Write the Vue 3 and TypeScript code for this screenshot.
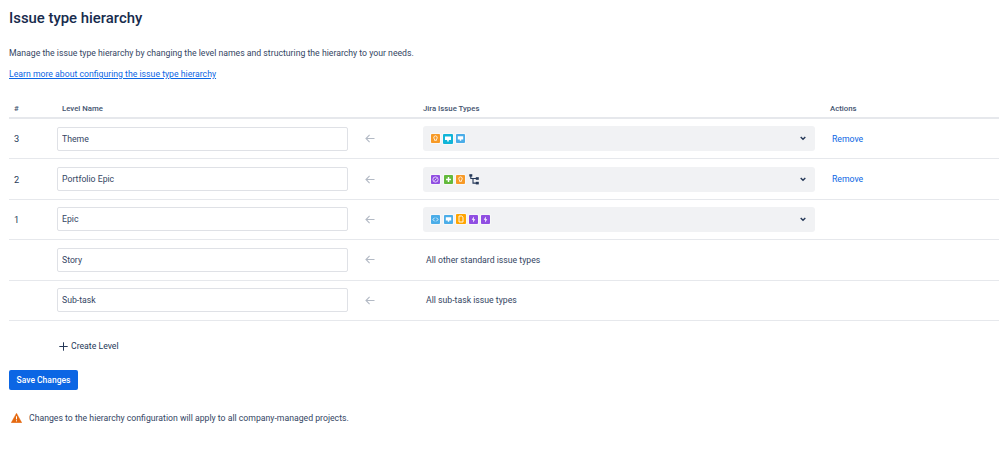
<script setup lang="ts">
type Icon = { c: string; k: string; big?: boolean };
type Row = { n: string; name: string; icons?: Icon[]; text?: string; remove?: boolean };
const or = '#f79a26', cy = '#10b5d8', bl = '#4bade8', pu = '#904ee2';
const rows: Row[] = [
  { n: '3', name: 'Theme', remove: true, icons: [{ c: or, k: 'bulb' }, { c: cy, k: 'screen', big: true }, { c: bl, k: 'screen' }] },
  { n: '2', name: 'Portfolio Epic', remove: true, icons: [{ c: pu, k: 'circle' }, { c: '#63ba3c', k: 'plus' }, { c: or, k: 'bulb' }, { c: 'none', k: 'tree' }] },
  { n: '1', name: 'Epic', icons: [{ c: bl, k: 'code' }, { c: bl, k: 'screen' }, { c: '#ffa500', k: 'doc', big: true }, { c: pu, k: 'bolt' }, { c: pu, k: 'bolt' }] },
  { n: '', name: 'Story', text: 'All other standard issue types' },
  { n: '', name: 'Sub-task', text: 'All sub-task issue types' },
];
</script>

<template>
  <main class="page">
    <h1 class="title">Issue type hierarchy</h1>
    <p class="desc">Manage the issue type hierarchy by changing the level names and structuring the hierarchy to your needs.</p>
    <a class="learn" href="#">Learn more about configuring the issue type hierarchy</a>

    <div class="grid head">
      <span class="num">#</span>
      <span class="lvl">Level Name</span>
      <span></span>
      <span class="jira">Jira Issue Types</span>
      <span>Actions</span>
    </div>

    <div v-for="r in rows" :key="r.name" class="grid row">
      <span class="num n">{{ r.n }}</span>
      <input class="input" :value="r.name" />
      <svg class="arrow" width="10" height="9" viewBox="0 0 10 9" fill="none" stroke="#b3bac5" stroke-width="1.1">
        <path d="M9.5 4.5H1M4.6 .8 1 4.5l3.6 3.7" />
      </svg>
      <div v-if="r.icons" class="select">
        <span class="icons">
          <template v-for="(ic, i) in r.icons" :key="i">
            <svg v-if="ic.k === 'tree'" class="tree" width="11" height="11" viewBox="0 0 11 11" fill="none" stroke="#253858" stroke-width="1.1">
              <path d="M1.8 1v3.5h6M4 4.5v4.6h4" />
              <rect x=".3" y=".2" width="3" height="2.4" fill="#253858" stroke="none" />
              <rect x="6.8" y="3.2" width="3" height="2.6" fill="#253858" stroke="none" />
              <rect x="6.8" y="7.8" width="3" height="2.6" fill="#253858" stroke="none" />
            </svg>
            <svg v-else class="ic" :class="{ big: ic.big }" viewBox="0 0 10 10">
              <rect width="10" height="10" rx="1" :fill="ic.c" />
              <path v-if="ic.k === 'bulb'" d="M5 2a2 2 0 0 0-1.1 3.6V7h2.2V5.6A2 2 0 0 0 5 2Z" fill="none" stroke="#fff" stroke-width=".9" />
              <path v-else-if="ic.k === 'screen'" d="M2 2.5h6v3.6H5.8V7.6H4.2V6.1H2Z" fill="#fff" />
              <g v-else-if="ic.k === 'circle'" fill="none" stroke="#fff" stroke-width=".8">
                <circle cx="5" cy="5" r="2.9" />
                <path d="M3.8 6.2 6.2 3.8" />
              </g>
              <path v-else-if="ic.k === 'plus'" d="M5 2.3v5.4M2.3 5h5.4" stroke="#fff" stroke-width="1.6" />
              <path v-else-if="ic.k === 'code'" d="M4 3 2.2 5 4 7M6 3l1.8 2L6 7" fill="none" stroke="#fff" stroke-width=".9" />
              <path v-else-if="ic.k === 'doc'" d="M3 2h2.8L7 3.2V8H3Z" fill="none" stroke="#fff" stroke-width=".9" />
              <path v-else d="M5.6 1.8 3 5.4h1.8L4.4 8.2 7 4.6H5.2Z" fill="#fff" />
            </svg>
          </template>
        </span>
        <svg width="6" height="5" viewBox="0 0 6 5" fill="none" stroke="#253858" stroke-width="1.4"><path d="M.7 1 3 3.3 5.3 1" /></svg>
      </div>
      <span v-else class="plain">{{ r.text }}</span>
      <a v-if="r.remove" class="remove" href="#">Remove</a>
      <span v-else></span>
    </div>

    <button class="create" type="button">
      <svg width="9" height="9" viewBox="0 0 9 9" stroke="#253858" stroke-width="1"><path d="M4.5 .3v8.4M.3 4.5h8.4" /></svg>
      Create Level
    </button>

    <button class="save" type="button">Save Changes</button>

    <div class="warn">
      <svg width="11" height="10" viewBox="0 0 12 11"><path d="M6 .3 11.8 10.7H.2Z" fill="#e56910" stroke="#e56910" stroke-linejoin="round" stroke-width=".5" /><path d="M6 3.6v3.4M6 8v1.2" stroke="#fff" stroke-width="1.1" /></svg>
      <span>Changes to the hierarchy configuration will apply to all company-managed projects.</span>
    </div>
  </main>
</template>

<style>
body { margin: 0; background: #fff; }
</style>

<style scoped>
.page {
  box-sizing: border-box;
  width: 999px;
  height: 449px;
  padding: 0 0 0 9px;
  overflow: hidden;
  font-family: Roboto, "Noto Sans", sans-serif;
  font-size: 8.7px;
  color: #253858;
}
.title {
  margin: 8px 0 0;
  font-size: 14.9px;
  line-height: 20px;
  font-weight: 500;
  color: #172b4d;
}
.desc { margin: 19px 0 0; line-height: 13px; color: #344563; }
.learn { display: block; margin-top: 8px; line-height: 13px; color: #0c66e4; text-decoration: underline; }
.grid {
  display: grid;
  grid-template-columns: 48px 291px 75px 392px 1fr;
  align-items: center;
  border-bottom: 1px solid #e6e8ec;
}
.head {
  margin-top: 21px;
  height: 13px;
  padding-bottom: 2px;
  border-bottom-width: 2px;
  font-size: 7.8px;
  font-weight: 500;
  color: #44546f;
}
.head .num { padding-left: 5px; }
.head .lvl { padding-left: 5px; }
.head span:last-child { padding-left: 15px; }
.row { height: 39.4px; }
.n { padding-left: 5px; font-size: 9.2px; }
.input {
  box-sizing: border-box;
  width: 291px;
  height: 24px;
  padding: 0 4px;
  border: 1px solid #dfe1e6;
  border-radius: 2px;
  background: #fff;
  font: inherit;
  color: #344563;
  outline: none;
}
.arrow { margin-left: 17px; }
.select {
  box-sizing: border-box;
  height: 25px;
  padding: 0 9px 0 8px;
  display: flex;
  align-items: center;
  justify-content: space-between;
  background: #f1f2f4;
  border-radius: 3px;
}
.icons { display: flex; align-items: center; gap: 3.5px; }
.ic { display: block; width: 9px; height: 9px; box-shadow: 0 0 0 .5px #fff; }
.ic.big { width: 10px; height: 10px; margin: 0 -.5px; }
.tree { display: block; }
.plain { padding-left: 3px; color: #344563; }
.remove { padding-left: 17px; color: #0c66e4; text-decoration: none; }
.create {
  display: flex;
  align-items: center;
  gap: 3px;
  margin: 19px 0 0 50px;
  padding: 0;
  border: 0;
  background: none;
  font: inherit;
  line-height: 13px;
  color: #253858;
}
.save {
  display: block;
  width: 69px;
  height: 20px;
  margin-top: 17px;
  padding: 0;
  border: 0;
  border-radius: 2px;
  background: #0c66e4;
  color: #fff;
  font: inherit;
  font-size: 8.5px;
  font-weight: 500;
}
.warn { display: flex; align-items: center; gap: 7px; margin-top: 22px; padding-left: 2px; line-height: 13px; color: #344563; }
</style>
